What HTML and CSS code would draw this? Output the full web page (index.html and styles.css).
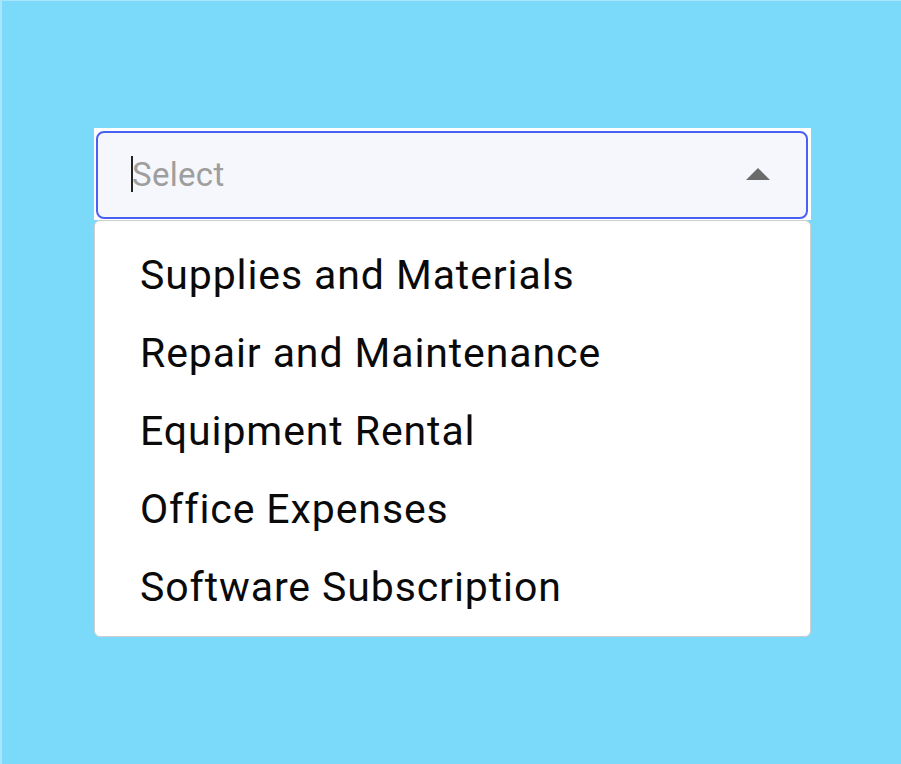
FILE: index.html
```html
<!DOCTYPE html>
<html lang="en">
<head>
    <meta charset="UTF-8">
    <meta name="viewport" content="width=device-width, initial-scale=1.0">
    <title>Select</title>
    <link rel="stylesheet" href="styles.css">
</head>
<body>
    <div class="select-wrap">
        <div class="select-head">
            <div class="select-box">
                <span class="caret"></span>
                <span class="placeholder">Select</span>
                <svg class="arrow" width="26" height="14" viewBox="0 0 26 14">
                    <path d="M1 13 L13 1 L25 13 Z" fill="#6b6b6b"/>
                </svg>
            </div>
        </div>
        <ul class="options">
            <li>Supplies and Materials</li>
            <li>Repair and Maintenance</li>
            <li>Equipment Rental</li>
            <li>Office Expenses</li>
            <li>Software Subscription</li>
        </ul>
    </div>
</body>
</html>
```

FILE: styles.css
```css
html, body { margin: 0; height: 100%; }
body { background: #7bd9f9; border-left: 2px solid #a9e6fb; border-top: 1px solid #a9e6fb; box-sizing: border-box; font-family: Roboto, "Liberation Sans", sans-serif; padding: 127px 0 0 92px; }
.select-wrap { width: 717px; }
.select-head { background: #fff; padding: 3px 3px 1px 2px; }
.select-box { display: flex; align-items: center; height: 88px; box-sizing: border-box; background: #f6f7fc; border: 2px solid #4a60f2; border-radius: 8px; padding: 0 35px 2px 33px; }
.caret { width: 2px; height: 36px; background: #222; margin-right: -1px; }
.placeholder { font-size: 33px; letter-spacing: 0.3px; color: #9e9e9e; flex: 1; }
.arrow { display: block; }
.options { list-style: none; margin: 0; padding: 15px 0 10px 0; background: #fff; border: 1px solid #cfcfcf; border-radius: 6px; }
.options li { font-size: 41px; letter-spacing: 0.9px; height: 78px; line-height: 78px; padding-left: 45px; color: #0a0a0a; }
```
